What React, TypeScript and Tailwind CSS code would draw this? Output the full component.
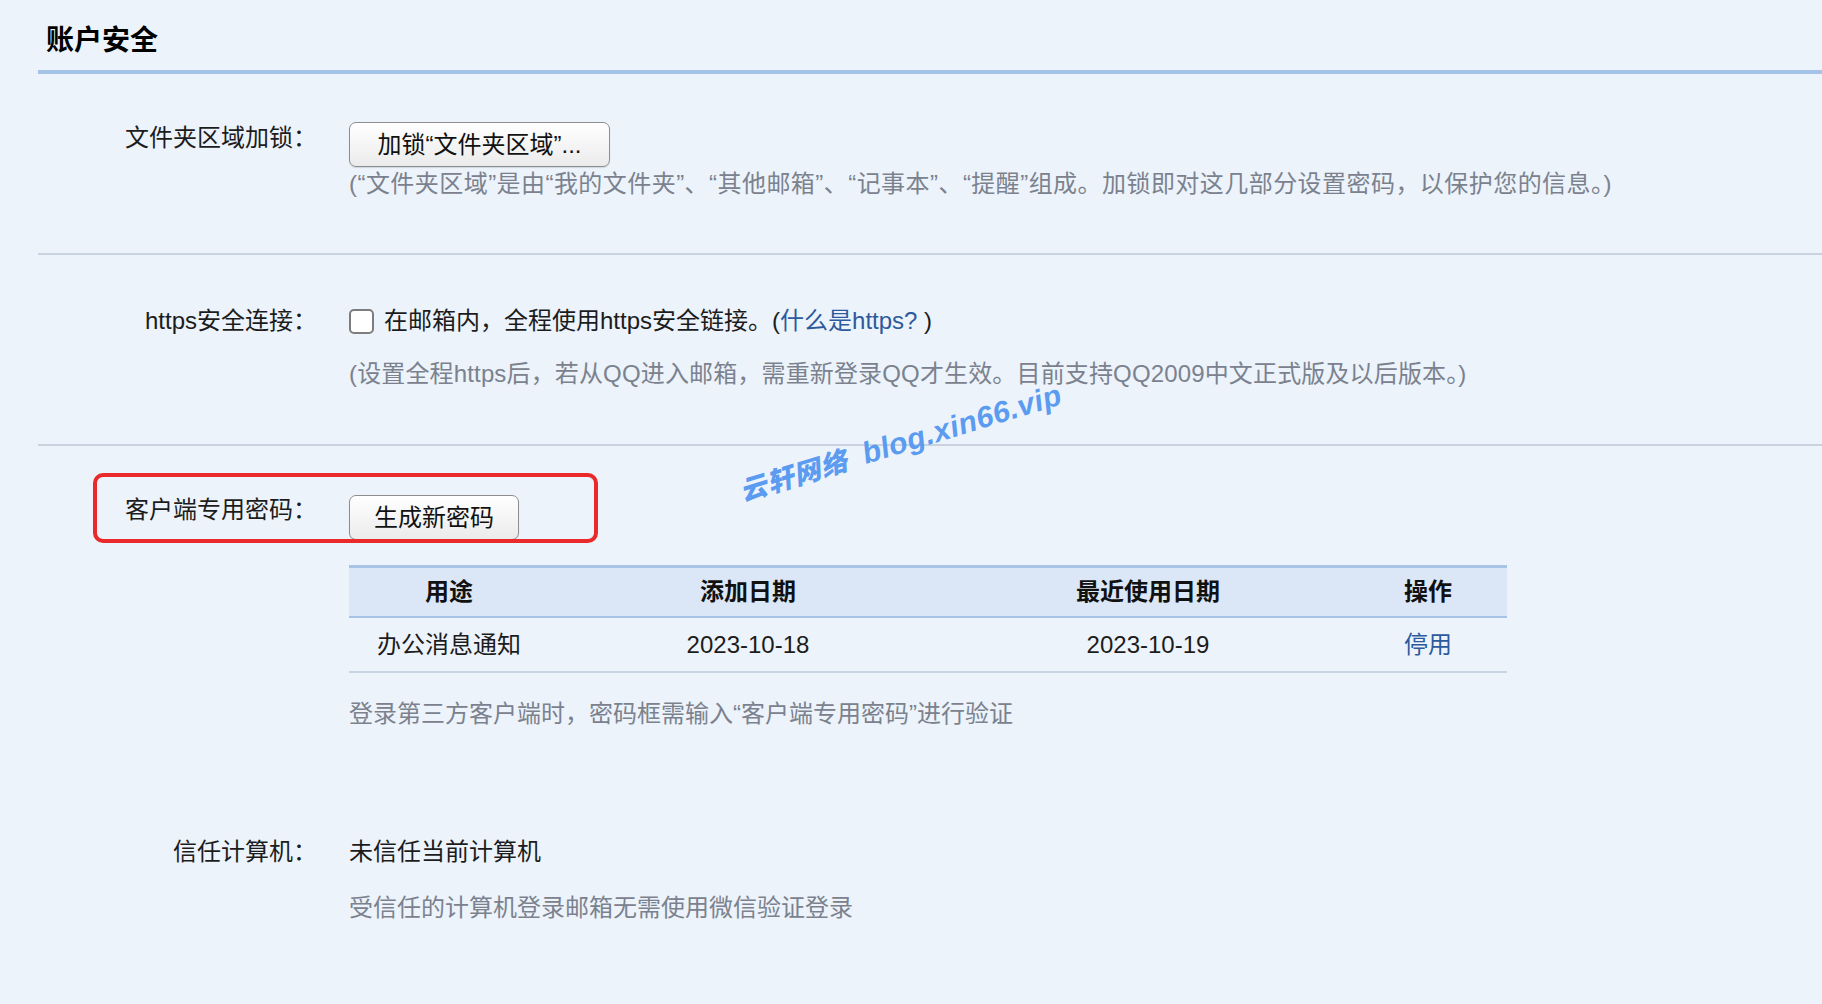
import React from 'react';

// Account security settings panel (mail settings page)

const FONT = "font-['Liberation_Sans','Noto_Sans_CJK_SC',sans-serif]";

const Label = ({ children }: { children: React.ReactNode }) => (
  <div className="w-[317px] shrink-0 text-right text-[24px] leading-[32px] text-[#1c1c1c]">{children}</div>
);

const LegacyButton = ({ label, width }: { label: string; width: string }) => (
  <button
    className={`${width} h-[45px] rounded-[7px] border border-[#8e8e8e] bg-gradient-to-b from-white to-[#ebebeb] text-[24px] leading-none text-[#111] shadow-[0_1px_1px_rgba(0,0,0,0.12)]`}
  >
    {label}
  </button>
);

const Divider = () => <div className="ml-[38px] h-[2px] bg-[#c9d3df]" />;

type Credential = { purpose: string; added: string; lastUsed: string };

const credentials: Credential[] = [{ purpose: '办公消息通知', added: '2023-10-18', lastUsed: '2023-10-19' }];

export default function App() {
  return (
    <div className={`${FONT} relative min-h-screen overflow-hidden bg-[#ecf3fb] text-[#1c1c1c]`}>
      {/* Header */}
      <h1 className="pl-[46px] pt-[22px] text-[28px] font-semibold leading-[38px] text-black">账户安全</h1>
      <div className="ml-[38px] mt-[10px] h-[4px] bg-[#a5c3e6]" />

      {/* Folder area lock */}
      <section className="flex pt-[48px] pb-[53px]">
        <Label>文件夹区域加锁：</Label>
        <div className="ml-[32px]">
          <LegacyButton label="加锁“文件夹区域”..." width="w-[261px]" />
          <p className="mt-px text-[24px] leading-[32px] tracking-[0.45px] text-[#7b828e]">
            (“文件夹区域”是由“我的文件夹”、“其他邮箱”、“记事本”、“提醒”组成。加锁即对这几部分设置密码，以保护您的信息。)
          </p>
        </div>
      </section>
      <Divider />

      {/* HTTPS */}
      <section className="flex pt-[50px] pb-[54px]">
        <Label>https安全连接：</Label>
        <div className="ml-[32px]">
          <label className="flex items-center text-[24px] leading-[32px]">
            <span className="mr-[10px] h-[25px] w-[25px] shrink-0 rounded-[5px] border-2 border-[#7d7d7d] bg-white" />
            <span>
              在邮箱内，全程使用https安全链接。(<a className="text-[#2d5a9c]">什么是https?</a>&nbsp;)
            </span>
          </label>
          <p className="mt-[21px] text-[24px] leading-[32px] tracking-[0.15px] text-[#7b828e]">
            (设置全程https后，若从QQ进入邮箱，需重新登录QQ才生效。目前支持QQ2009中文正式版及以后版本。)
          </p>
        </div>
      </section>
      <Divider />

      {/* Client-specific password */}
      <section className="relative flex pt-[48px]">
        <div className="pointer-events-none absolute left-[93px] top-[27px] h-[70px] w-[505px] rounded-[10px] border-[4px] border-[#ea2a2a]" />
        <Label>客户端专用密码：</Label>
        <div className="ml-[32px]">
          <div className="pt-px">
            <LegacyButton label="生成新密码" width="w-[170px]" />
          </div>
          <div className="mt-[25px] w-[1158px]">
            <div className="grid grid-cols-[200px_398px_402px_158px] border-t-[3px] border-b-2 border-[#a7c4e6] bg-[#dbe7f6] text-center text-[24px] font-bold leading-[48px] text-[#111]">
              <div>用途</div>
              <div>添加日期</div>
              <div>最近使用日期</div>
              <div>操作</div>
            </div>
            {credentials.map((c) => (
              <div
                key={c.purpose}
                className="grid grid-cols-[200px_398px_402px_158px] border-b-2 border-[#c9d4e2] text-center text-[24px] leading-[53px]"
              >
                <div>{c.purpose}</div>
                <div>{c.added}</div>
                <div>{c.lastUsed}</div>
                <div className="text-[#2d5a9c]">停用</div>
              </div>
            ))}
          </div>
          <p className="mt-[25px] text-[24px] leading-[32px] text-[#7b828e]">
            登录第三方客户端时，密码框需输入“客户端专用密码”进行验证
          </p>
        </div>
      </section>

      {/* Trusted computer */}
      <section className="flex pt-[106px] pb-[60px]">
        <Label>信任计算机：</Label>
        <div className="ml-[32px]">
          <p className="text-[24px] leading-[32px]">未信任当前计算机</p>
          <p className="mt-[24px] text-[24px] leading-[32px] text-[#7b828e]">受信任的计算机登录邮箱无需使用微信验证登录</p>
        </div>
      </section>

      {/* Blog watermark */}
      <div className="pointer-events-none absolute left-[733px] top-[428px] flex -rotate-[17deg] items-baseline whitespace-nowrap font-black italic leading-none text-[#5b9bf0]">
        <span className="text-[27px] tracking-[1px]">云轩网络</span>
        <span className="ml-[16px] text-[30px] tracking-[0.5px]">blog.xin66.vip</span>
      </div>
    </div>
  );
}
